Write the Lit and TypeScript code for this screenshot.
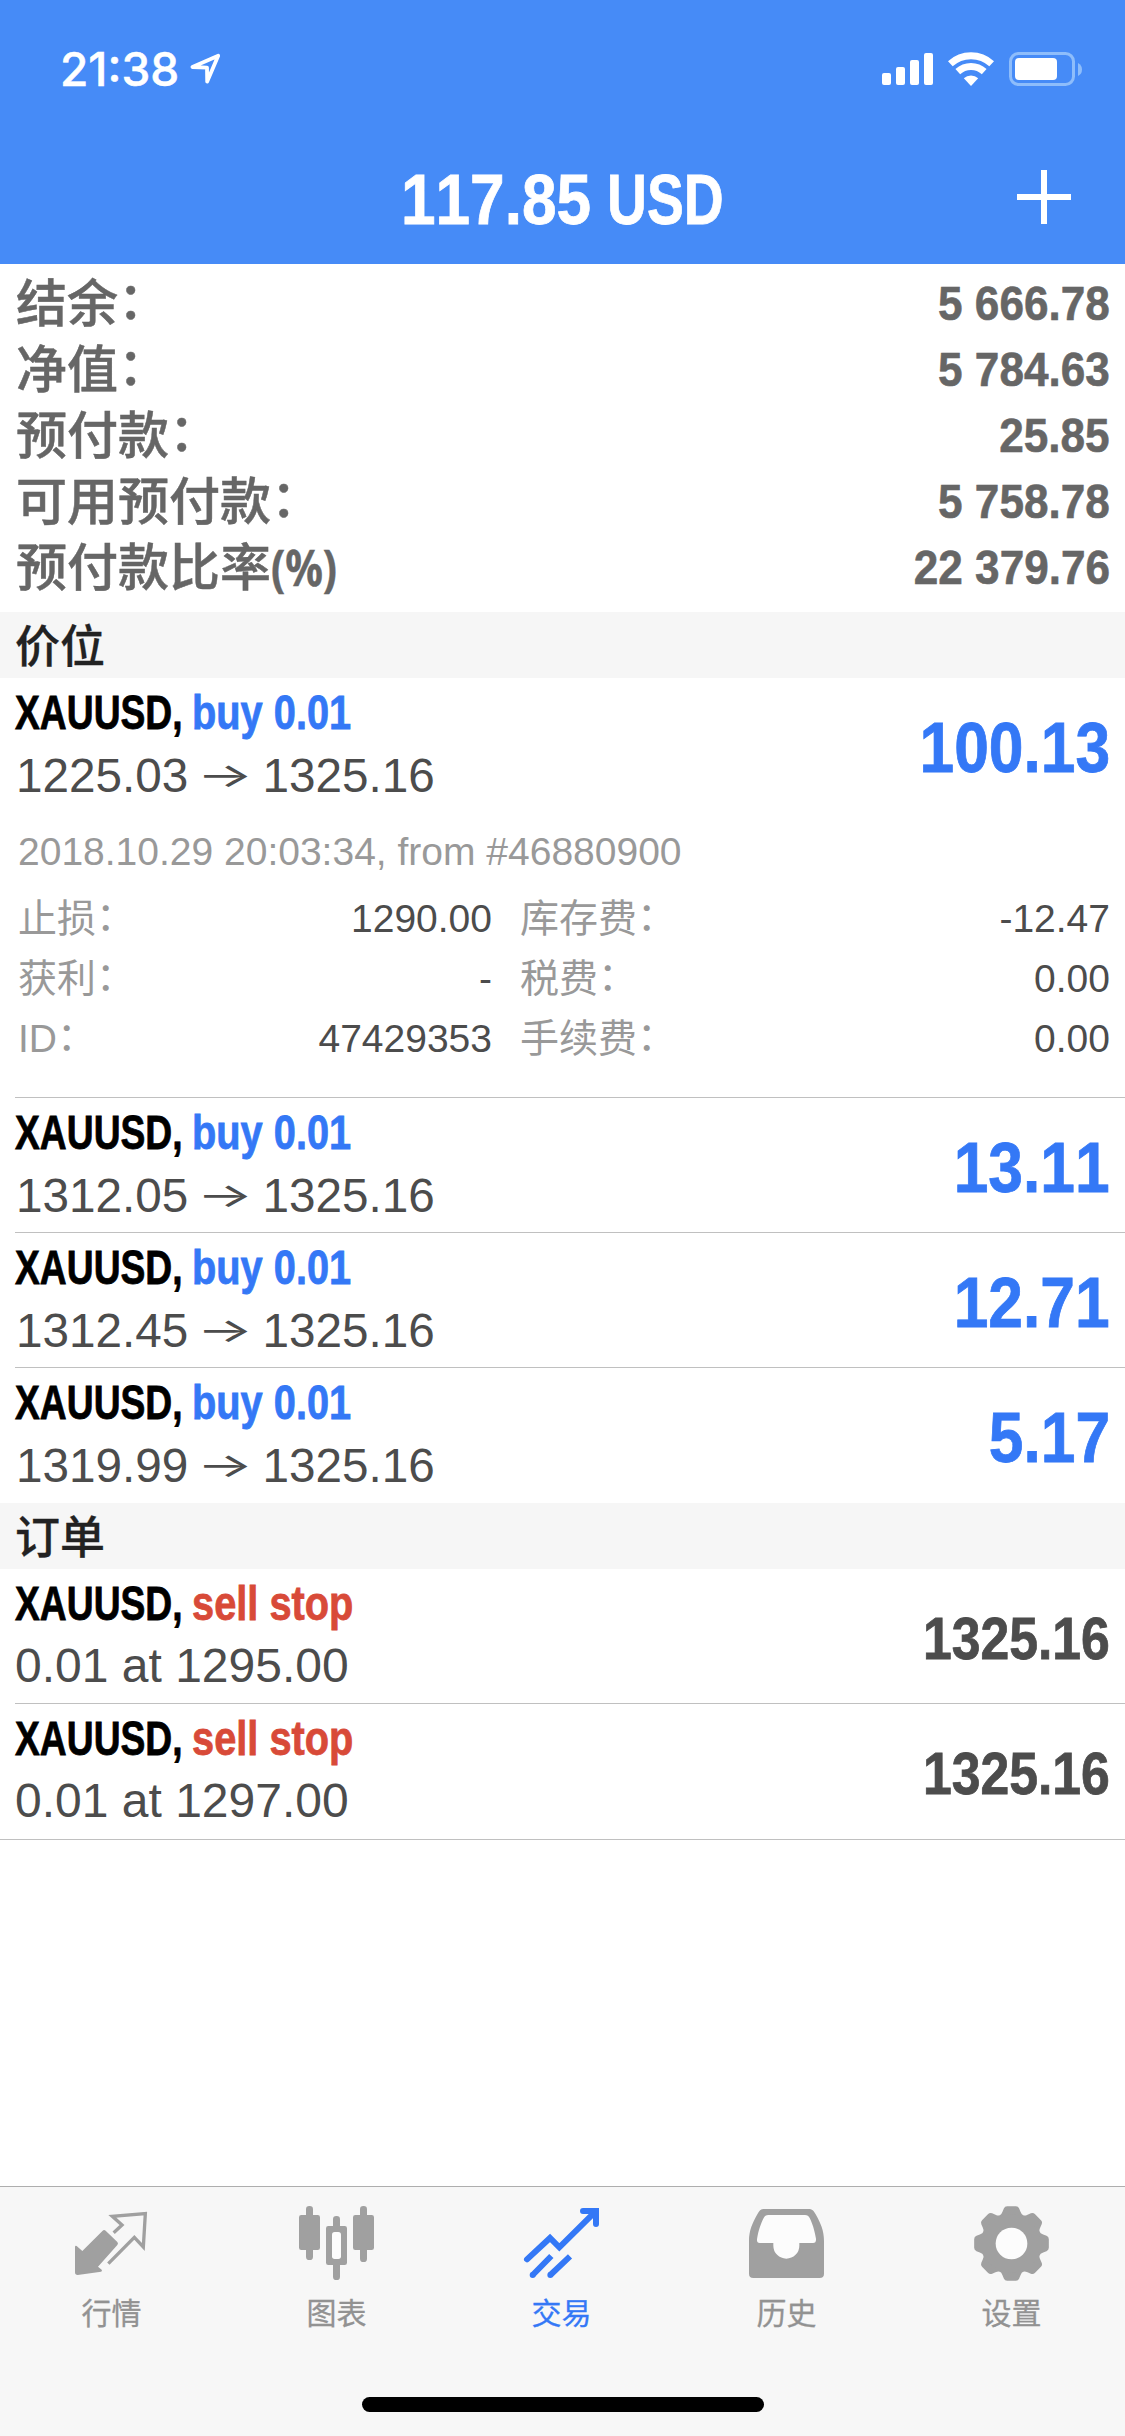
import { LitElement, html, svg, css, nothing } from "lit";
import { customElement, property } from "lit/decorators.js";

interface Position {
  side: string;
  open: string;
  profit: string;
}

const summary: [string, string][] = [
  ["结余", "5 666.78"],
  ["净值", "5 784.63"],
  ["预付款", "25.85"],
  ["可用预付款", "5 758.78"],
  ["预付款比率", "22 379.76"],
];

const positions: Position[] = [
  { side: "buy 0.01", open: "1225.03", profit: "100.13" },
  { side: "buy 0.01", open: "1312.05", profit: "13.11" },
  { side: "buy 0.01", open: "1312.45", profit: "12.71" },
  { side: "buy 0.01", open: "1319.99", profit: "5.17" },
];

const details: [string, string][] = [
  ["止损", "1290.00"],
  ["库存费", "-12.47"],
  ["获利", "-"],
  ["税费", "0.00"],
  ["ID", "47429353"],
  ["手续费", "0.00"],
];

const orders = ["1295.00", "1297.00"];

const gearTooth =
  "M0 0L-36 -84Q-30 -86 -27 -95L-23 -105Q-20 -112 -13 -112L13 -112Q20 -112 23 -105L27 -95Q30 -86 36 -84Z";

const tabs = [
  {
    label: "行情",
    box: "225 108 225 225",
    icon: svg`
      <path fill="currentColor" d="M225 230Q226 226 230 228L247 243L308 182Q312 178 317 182L352 216Q356 220 352 225L294 290L305 299Q308 303 303 305L233 315Q225 315 225 307Z"/>
      <path fill="none" stroke="currentColor" stroke-width="10" d="M341 188L366 165L337 139L436 131L430 231L403 202L325 281"/>`,
  },
  {
    label: "图表",
    box: "900 108 225 225",
    icon: svg`
      <g fill="currentColor">
        <rect x="897" y="135" width="63" height="105" rx="7"/>
        <rect x="918" y="108" width="21" height="162" rx="10"/>
        <rect x="978" y="168" width="63" height="117" rx="7"/>
        <rect x="999" y="138" width="21" height="192" rx="10"/>
        <rect x="1059" y="135" width="63" height="105" rx="7"/>
        <rect x="1080" y="108" width="21" height="168" rx="10"/>
      </g>
      <rect fill="#fcfcfc" x="996" y="186" width="27" height="81" rx="8"/>`,
  },
  {
    label: "交易",
    box: "375 108 225 225",
    active: true,
    icon: svg`
      <g fill="none" stroke="currentColor" stroke-width="18">
        <path stroke-linecap="round" d="M381 268L450 204L478 232L586 125"/>
        <path stroke-linecap="round" d="M549 123H588V162"/>
        <path d="M398 315L454 258M451 315L510 259"/>
      </g>
      <g fill="currentColor"><circle cx="398" cy="315" r="9"/><circle cx="451" cy="315" r="9"/></g>`,
  },
  {
    label: "历史",
    box: "75 108 225 225",
    icon: svg`
      <path fill="currentColor" d="M118 117H250C262 117 266 122 272 133C287 160 297 182 297 213V311Q297 324 284 324H85Q72 324 72 311V213C72 182 82 160 97 133C103 122 107 117 118 117Z"/>
      <path fill="#fcfcfc" d="M130 135H240Q250 135 254 144C262 160 268 178 273 206Q274 219 264 219H223V227A39 39 0 0 1 145 227V219H104Q95 219 96 208C100 180 108 160 116 144Q120 135 130 135Z"/>`,
  },
  {
    label: "设置",
    box: "750 108 225 225",
    icon: svg`
      <g fill="currentColor" transform="translate(859.5 220.5)">
        ${[0, 45, 90, 135, 180, 225, 270, 315].map(
          (a) => svg`<path transform="rotate(${a})" d=${gearTooth}/>`
        )}
        <circle r="88"/>
        <circle r="47.5" fill="#fcfcfc"/>
      </g>`,
  },
];

@customElement("status-bar")
export class StatusBar extends LitElement {
  static styles = css`
    :host {
      display: flex;
      height: 132px;
      box-sizing: border-box;
      padding: 52px 43px 0 60px;
      color: #fff;
      align-items: flex-start;
    }
    .time {
      font: 500 46px/34px Inter, "Liberation Sans", sans-serif;
      width: 130px;
      white-space: nowrap;
      -webkit-text-stroke: 0.5px #fff;
    }
    .spacer {
      flex: 1;
    }
    svg {
      display: block;
    }
    .wifi {
      margin: 0 15px;
    }
  `;
  render() {
    return html`
      <div class="time">21:38</div>
      <svg width="30" height="34" viewBox="190 52 30 34">
        <path d="M192.400 67L218.200 55.800L207.200 81.600L207 67.600Z" fill="none" stroke="#fff" stroke-width="3.8" stroke-linejoin="round" />
      </svg>
      <div class="spacer"></div>
      <svg width="51" height="34" viewBox="882 52 51 34" fill="#fff">
        <rect x="882" y="73" width="9" height="12" rx="2" />
        <rect x="896" y="67" width="9" height="18" rx="2" />
        <rect x="910" y="60" width="9" height="25" rx="2" />
        <rect x="924" y="53" width="9" height="32" rx="2" />
      </svg>
      <svg class="wifi" width="46" height="34" viewBox="948 52 46 34">
        <g fill="none" stroke="#fff" stroke-width="7">
          <path d="M950.3 63.8A30.5 30.5 0 0 1 991.7 63.8" />
          <path d="M957.8 71.7A19.5 19.5 0 0 1 984.2 71.7" />
        </g>
        <path fill="#fff" d="M971 86L963.8 78.2A11 11 0 0 1 978.2 78.2Z" />
      </svg>
      <svg width="73" height="34" viewBox="1009 52 73 34">
        <rect x="1010.5" y="53.5" width="63" height="31" rx="8" fill="none" stroke="#8ebdfb" stroke-width="3" />
        <rect x="1015" y="58" width="42" height="22" rx="4" fill="#fff" />
        <path d="M1078 63Q1082 65 1082 69.500Q1082 74 1078 76Z" fill="#8ebdfb" />
      </svg>
    `;
  }
}

@customElement("trade-row")
export class TradeRow extends LitElement {
  @property() side = "";
  @property() tone = "";
  @property() value = "";

  static styles = css`
    :host {
      display: flex;
      justify-content: space-between;
      align-items: center;
      height: 134px;
      padding: 0 15px;
      font-family: "Liberation Sans", sans-serif;
      white-space: nowrap;
    }
    .head {
      display: flex;
      height: 60px;
      padding-top: 4px;
      font-weight: 700;
      font-size: 49px;
      line-height: 60px;
      -webkit-text-stroke: 0.8px currentColor;
    }
    .symbol {
      width: 176.5px;
      color: #000;
    }
    .symbol span,
    .side span {
      display: inline-block;
      transform-origin: left;
      transform: scaleX(0.76);
    }
    .buy {
      color: #3478f6;
    }
    .sell {
      color: #d84a38;
    }
    .side span {
      transform: scaleX(0.812);
    }
    .line {
      height: 70px;
      font-size: 48px;
      line-height: 66px;
      color: #4c4c4c;
    }
    .line.buy {
      padding-left: 1px;
      font-size: 47.7px;
      color: #4c4c4c;
    }
    .line.sell {
      color: #4c4c4c;
    }
    .value {
      font-weight: 700;
      transform-origin: right;
      padding-top: 5px;
      -webkit-text-stroke: 0.8px currentColor;
    }
    .value.buy {
      font-size: 71px;
      transform: scaleX(0.878);
    }
    .value.sell {
      font-size: 60px;
      transform: scaleX(0.862);
      color: #4c4c4c;
    }
  `;
  render() {
    return html`
      <div>
        <div class="head">
          <div class="symbol"><span>XAUUSD,</span></div>
          <div class="side ${this.tone}"><span>${this.side}</span></div>
        </div>
        <div class="line ${this.tone}"><slot></slot></div>
      </div>
      <div class="value ${this.tone}">${this.value}</div>
    `;
  }
}

@customElement("app-root")
export class AppRoot extends LitElement {
  static styles = css`
    :host {
      display: flex;
      flex-direction: column;
      width: 1125px;
      height: 2436px;
      overflow: hidden;
      background: #fff;
      font-family: "Liberation Sans", "Noto Sans CJK SC", sans-serif;
      font-kerning: none;
    }
    .header {
      flex: none;
      height: 264px;
      background: #468bf7;
      color: #fff;
    }
    .nav {
      display: grid;
      grid-template-columns: 1fr auto 1fr;
      align-items: center;
      height: 129px;
      padding: 3px 54px 0;
    }
    .nav h1 {
      grid-column: 2;
      display: flex;
      width: 323px;
      margin: 0;
      font-size: 71px;
      line-height: 80px;
      white-space: nowrap;
      -webkit-text-stroke: 0.8px #fff;
    }
    .amount {
      width: 206px;
    }
    .currency {
      width: 117px;
    }
    .amount span,
    .currency span {
      display: inline-block;
      transform-origin: left;
      transform: scaleX(0.875);
    }
    .currency span {
      transform: scaleX(0.778);
    }
    .nav svg {
      justify-self: end;
      margin-top: -6px;
    }
    .summary {
      flex: none;
      height: 342px;
      padding: 6px 15px 0;
      color: #666;
    }
    .sum-row {
      display: flex;
      justify-content: space-between;
      height: 66px;
      line-height: 66px;
      white-space: nowrap;
    }
    .sum-label {
      font-family: "Noto Sans CJK SC", sans-serif;
      font-weight: 500;
      font-size: 51px;
      height: 66px;
      margin: -3px 0 0 1px;
      -webkit-text-stroke: 0.5px #666;
    }
    .colon {
      font-family: "Noto Sans CJK SC", sans-serif;
      line-height: 0;
      vertical-align: 0.06em;
    }
    .pct {
      display: inline-block;
      font-family: "Noto Sans", sans-serif;
      font-weight: 700;
      font-size: 50px;
      transform: scaleX(0.835);
      transform-origin: left;
    }
    .sum-value {
      font-weight: 700;
      font-size: 49px;
      transform: scaleX(0.9);
      transform-origin: right;
      -webkit-text-stroke: 0.6px #666;
    }
    .section {
      flex: none;
      height: 66px;
      padding: 0 15px;
      background: #f6f6f6;
      color: #222;
      font: 500 45px/64px "Noto Sans CJK SC", sans-serif;
      -webkit-text-stroke: 0.3px #222;
    }
    .rule {
      flex: none;
      height: 1px;
      margin-left: 15px;
      background: #c0c0c0;
    }
    .full {
      margin-left: 0;
    }
    .end {
      margin-bottom: 1px;
    }
    .arrow {
      display: inline-block;
      width: 74px;
      text-align: center;
      font-family: Inter, sans-serif;
      font-weight: 400;
      transform: scale(1.24, 0.72);
    }
    .detail {
      flex: none;
      height: 277px;
      padding: 8px 15px 0 18px;
      font-size: 39px;
      color: #999;
    }
    .meta {
      height: 68px;
      line-height: 63px;
      padding: 0;
      white-space: nowrap;
    }
    .pairs {
      display: grid;
      grid-template-columns: 474px 1fr;
      column-gap: 28px;
      grid-auto-rows: 60px;
    }
    .pair {
      display: flex;
      justify-content: space-between;
      line-height: 60px;
      height: 60px;
    }
    .pair span {
      padding-top: 1px;
    }
    .pair b {
      font-weight: 400;
      color: #4c4c4c;
      padding-top: 1px;
    }
    .tabbar {
      flex: none;
      margin-top: auto;
      height: 249px;
      border-top: 1px solid #aeaeae;
      background: #f7f7f7;
      display: flex;
      flex-direction: column;
      align-items: center;
    }
    .tabs {
      width: 100%;
      height: 210px;
      display: grid;
      grid-template-columns: repeat(5, 1fr);
    }
    .tab {
      display: flex;
      flex-direction: column;
      align-items: center;
      padding-top: 19px;
      color: #a0a0a0;
    }
    .tab svg {
      overflow: visible;
    }
    .tab span {
      margin: 8px 2px 0 0;
      font: 400 30px/44px "Noto Sans CJK SC", sans-serif;
      color: #929292;
      -webkit-text-stroke: 0.3px currentColor;
    }
    .tab.active,
    .tab.active span {
      color: #3478f6;
    }
    .home {
      width: 402px;
      height: 15px;
      border-radius: 8px;
      background: #000;
    }
  `;

  render() {
    const colon = html`<span class="colon">：</span>`;
    return html`
      <div class="header">
        <status-bar></status-bar>
        <div class="nav">
          <h1>
            <div class="amount"><span>117.85</span></div>
            <div class="currency"><span>USD</span></div>
          </h1>
          <svg width="54" height="54" viewBox="0 0 54 54" fill="#fff">
            <rect x="24" width="6" height="54" />
            <rect y="24" width="54" height="6" />
          </svg>
        </div>
      </div>
      <div class="summary">
        ${summary.map(
          ([label, value], i) => html`<div class="sum-row">
            <div class="sum-label">${label}${i === 4 ? html`<span class="pct">(%)</span>` : colon}</div>
            <div class="sum-value">${value}</div>
          </div>`
        )}
      </div>
      <div class="section">价位</div>
      ${positions.map(
        (p, i) => html`
          <trade-row side=${p.side} tone="buy" value=${p.profit}
            >${p.open}<span class="arrow">→</span>1325.16</trade-row
          >
          ${i === 0
            ? html`<div class="detail">
                <div class="meta">2018.10.29 20:03:34, from #46880900</div>
                <div class="pairs">
                  ${details.map(
                    ([k, v]) => html`<div class="pair"><span>${k}${colon}</span><b>${v}</b></div>`
                  )}
                </div>
              </div>`
            : nothing}
          ${i < 3 ? html`<div class="rule"></div>` : html`<div class="end"></div>`}
        `
      )}
      <div class="section">订单</div>
      ${orders.map(
        (price, i) => html`
          <trade-row side="sell stop" tone="sell" value="1325.16">0.01 at ${price}</trade-row>
          ${i === 0 ? html`<div class="rule"></div>` : html`<div class="end"></div><div class="rule full"></div>`}
        `
      )}
      <div class="tabbar">
        <div class="tabs">
          ${tabs.map(
            (t) => html`<div class="tab ${t.active ? "active" : ""}">
              <svg width="75" height="75" viewBox=${t.box}>${t.icon}</svg>
              <span>${t.label}</span>
            </div>`
          )}
        </div>
        <div class="home"></div>
      </div>
    `;
  }
}
